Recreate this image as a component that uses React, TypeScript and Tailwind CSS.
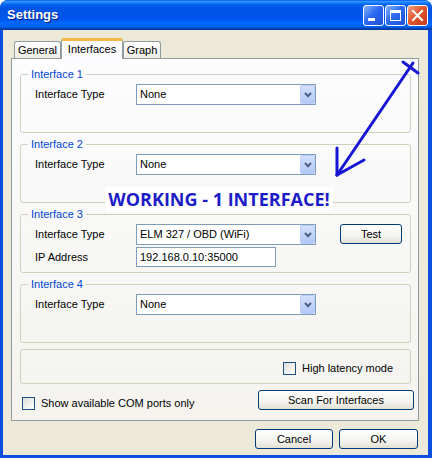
import React from "react";

function Checkbox() {
  return (
    <span className="block w-[13px] h-[13px] shrink-0 border border-[#1c5180] bg-[linear-gradient(135deg,#dcdcd7,#ffffff)]" />
  );
}

function XpButton({ label, className }: { label: string; className: string }) {
  return (
    <button
      className={`h-[20px] shrink-0 rounded-[3px] border border-[#003c74] bg-[linear-gradient(to_bottom,#ffffff,#f3f3ef_60%,#e3e0d3)] text-[11px] leading-[13px] text-black flex items-center justify-center ${className}`}
    >
      {label}
    </button>
  );
}

function Combo({ value }: { value: string }) {
  return (
    <div className="w-[180px] h-[21px] shrink-0 border border-[#7f9db9] bg-white flex items-center justify-between pl-[3px]">
      <span className="text-[11px] leading-[13px]">{value}</span>
      <span className="w-[15px] h-[19px] rounded-[2px] border border-[#b9cdfb] bg-[linear-gradient(to_bottom,#d3e0fd,#b3c8f6)] flex items-center justify-center">
        <svg width="8" height="6" viewBox="0 0 8 6">
          <path d="M1 1 L4 4.2 L7 1" fill="none" stroke="#4d6185" strokeWidth="2" />
        </svg>
      </span>
    </div>
  );
}

function Row({ label, children }: { label: string; children: React.ReactNode }) {
  return (
    <div className="flex items-start">
      <span className="w-[101px] h-[21px] flex items-center text-[11px] leading-[13px]">{label}</span>
      {children}
    </div>
  );
}

function Group({ title, children }: { title: string; children: React.ReactNode }) {
  return (
    <fieldset className="border border-[#d0d0bf] rounded-[3px] mb-[5px]">
      <legend className="ml-[7px] px-[3px] text-[11px] leading-[13px] text-[#0046d5]">{title}</legend>
      <div className="h-[51px] pt-[3px] pl-[14px] flex flex-col gap-[2px]">{children}</div>
    </fieldset>
  );
}

function TitleButton({ kind }: { kind: "min" | "max" | "close" }) {
  const bg =
    kind === "close"
      ? "bg-[linear-gradient(135deg,#f2a389,#e2582f_45%,#c4391b)]"
      : "bg-[linear-gradient(135deg,#8ab3ff,#2d6bf0_45%,#1d4fd3)]";
  return (
    <div className={`w-[21px] h-[21px] rounded-[3px] border border-white flex items-center justify-center ${bg}`}>
      {kind === "min" && (
        <svg width="19" height="19" viewBox="0 0 19 19">
          <rect x="4" y="12" width="7" height="3" fill="white" />
        </svg>
      )}
      {kind === "max" && (
        <svg width="19" height="19" viewBox="0 0 19 19">
          <rect x="4.5" y="4.5" width="10" height="10" fill="none" stroke="white" strokeWidth="1" />
          <rect x="4" y="4" width="11" height="3" fill="white" />
        </svg>
      )}
      {kind === "close" && (
        <svg width="19" height="19" viewBox="0 0 19 19">
          <path d="M5 5 L14 14 M14 5 L5 14" stroke="white" strokeWidth="2" strokeLinecap="square" />
        </svg>
      )}
    </div>
  );
}

export default function App() {
  return (
    <div className="relative w-[434px] h-[461px] bg-white overflow-hidden font-['Liberation_Sans',Arial,sans-serif] text-black">
      <div className="w-[432px] h-[458px] rounded-t-[8px] overflow-hidden bg-[#0b4ee0] flex flex-col">
        {/* title bar */}
        <div className="h-[30px] shrink-0 flex items-center pl-[7px] pr-[4px] bg-[linear-gradient(to_bottom,#0058ee_0%,#3593ff_5%,#127dff_10%,#0262ee_16%,#0054e3_26%,#0055eb_56%,#005bf5_68%,#026afe_78%,#0062ef_88%,#0052d6_93%,#0040ab_96%,#003092_100%)]">
          <span className="text-white font-bold text-[13px] [text-shadow:1px_1px_0_#0a1883]">Settings</span>
          <div className="ml-auto flex gap-[1px] pt-[1px]">
            <TitleButton kind="min" />
            <TitleButton kind="max" />
            <TitleButton kind="close" />
          </div>
        </div>

        {/* dialog body */}
        <div className="ml-[3px] mr-[4px] h-[425px] bg-[#ece9d8] flex flex-col">
          <div className="mt-[8px] ml-[11px] h-[21px] flex items-end text-[11px] leading-[13px]">
            <div className="w-[47px] h-[18px] rounded-t-[3px] border border-b-0 border-[#919b9c] bg-[linear-gradient(to_bottom,#ffffff,#ecebe6)] flex items-center justify-center">
              General
            </div>
            <div className="relative z-10 w-[62px] h-[21px] rounded-t-[3px] border-x border-[#919b9c] border-t-[3px] border-t-[#f7b745] bg-[#fcfcfe] flex items-center justify-center pb-[2px]">
              Interfaces
            </div>
            <div className="w-[38px] h-[18px] rounded-t-[3px] border border-b-0 border-[#919b9c] bg-[linear-gradient(to_bottom,#ffffff,#ecebe6)] flex items-center justify-center">
              Graph
            </div>
          </div>

          <div className="-mt-[1px] ml-[8px] w-[408px] h-[363px] border border-[#919b9c] bg-[linear-gradient(to_bottom,#fcfcfe,#f4f3ee)] pt-[9px]">
            <div className="pl-[8px] pr-[7px]">
              <Group title="Interface 1">
                <Row label="Interface Type">
                  <Combo value="None" />
                </Row>
              </Group>
              <Group title="Interface 2">
                <Row label="Interface Type">
                  <Combo value="None" />
                </Row>
              </Group>
              <Group title="Interface 3">
                <Row label="Interface Type">
                  <Combo value="ELM 327 / OBD (WiFi)" />
                  <XpButton label="Test" className="ml-[24px] w-[62px]" />
                </Row>
                <div className="flex items-center">
                  <span className="w-[101px] text-[11px] leading-[13px]">IP Address</span>
                  <div className="w-[140px] h-[20px] border border-[#7f9db9] bg-white flex items-center pl-[3px] text-[11px] leading-[13px]">
                    192.168.0.10:35000
                  </div>
                </div>
              </Group>
              <Group title="Interface 4">
                <Row label="Interface Type">
                  <Combo value="None" />
                </Row>
              </Group>
              <div className="mt-[6px] h-[35px] border border-[#d0d0bf] rounded-[3px] flex items-start pt-[12px] pl-[262px] gap-[6px]">
                <Checkbox />
                <span className="text-[11px] leading-[13px]">High latency mode</span>
              </div>
            </div>
            <div className="mt-[6px] flex items-start pl-[10px] pr-[4px]">
              <div className="mt-[7px] flex items-center gap-[6px]">
                <Checkbox />
                <span className="text-[11px] leading-[13px]">Show available COM ports only</span>
              </div>
              <XpButton label="Scan For Interfaces" className="ml-auto w-[156px]" />
            </div>
          </div>

          <div className="mt-[8px] flex justify-end gap-[6px] pr-[10px]">
            <XpButton label="Cancel" className="w-[78px]" />
            <XpButton label="OK" className="w-[79px]" />
          </div>
        </div>
      </div>

      {/* annotation drawn on top of the screenshot */}
      <svg className="absolute left-0 top-0 pointer-events-none" width="434" height="461" viewBox="0 0 434 461">
        <g stroke="#1616d4" strokeWidth="3" strokeLinecap="round" fill="none">
          <path d="M413 63 L337 175" />
          <path d="M403 62 L418 73" />
          <path d="M337 175 L337 148" />
          <path d="M337 175 L364 160" />
        </g>
      </svg>
      <div className="absolute left-[105px] top-[187px] w-[228px] h-[25px] bg-white flex items-center justify-center font-['Open_Sans',sans-serif] font-bold text-[18px] text-[#1c1cc8]">
        WORKING - 1 INTERFACE!
      </div>
    </div>
  );
}
